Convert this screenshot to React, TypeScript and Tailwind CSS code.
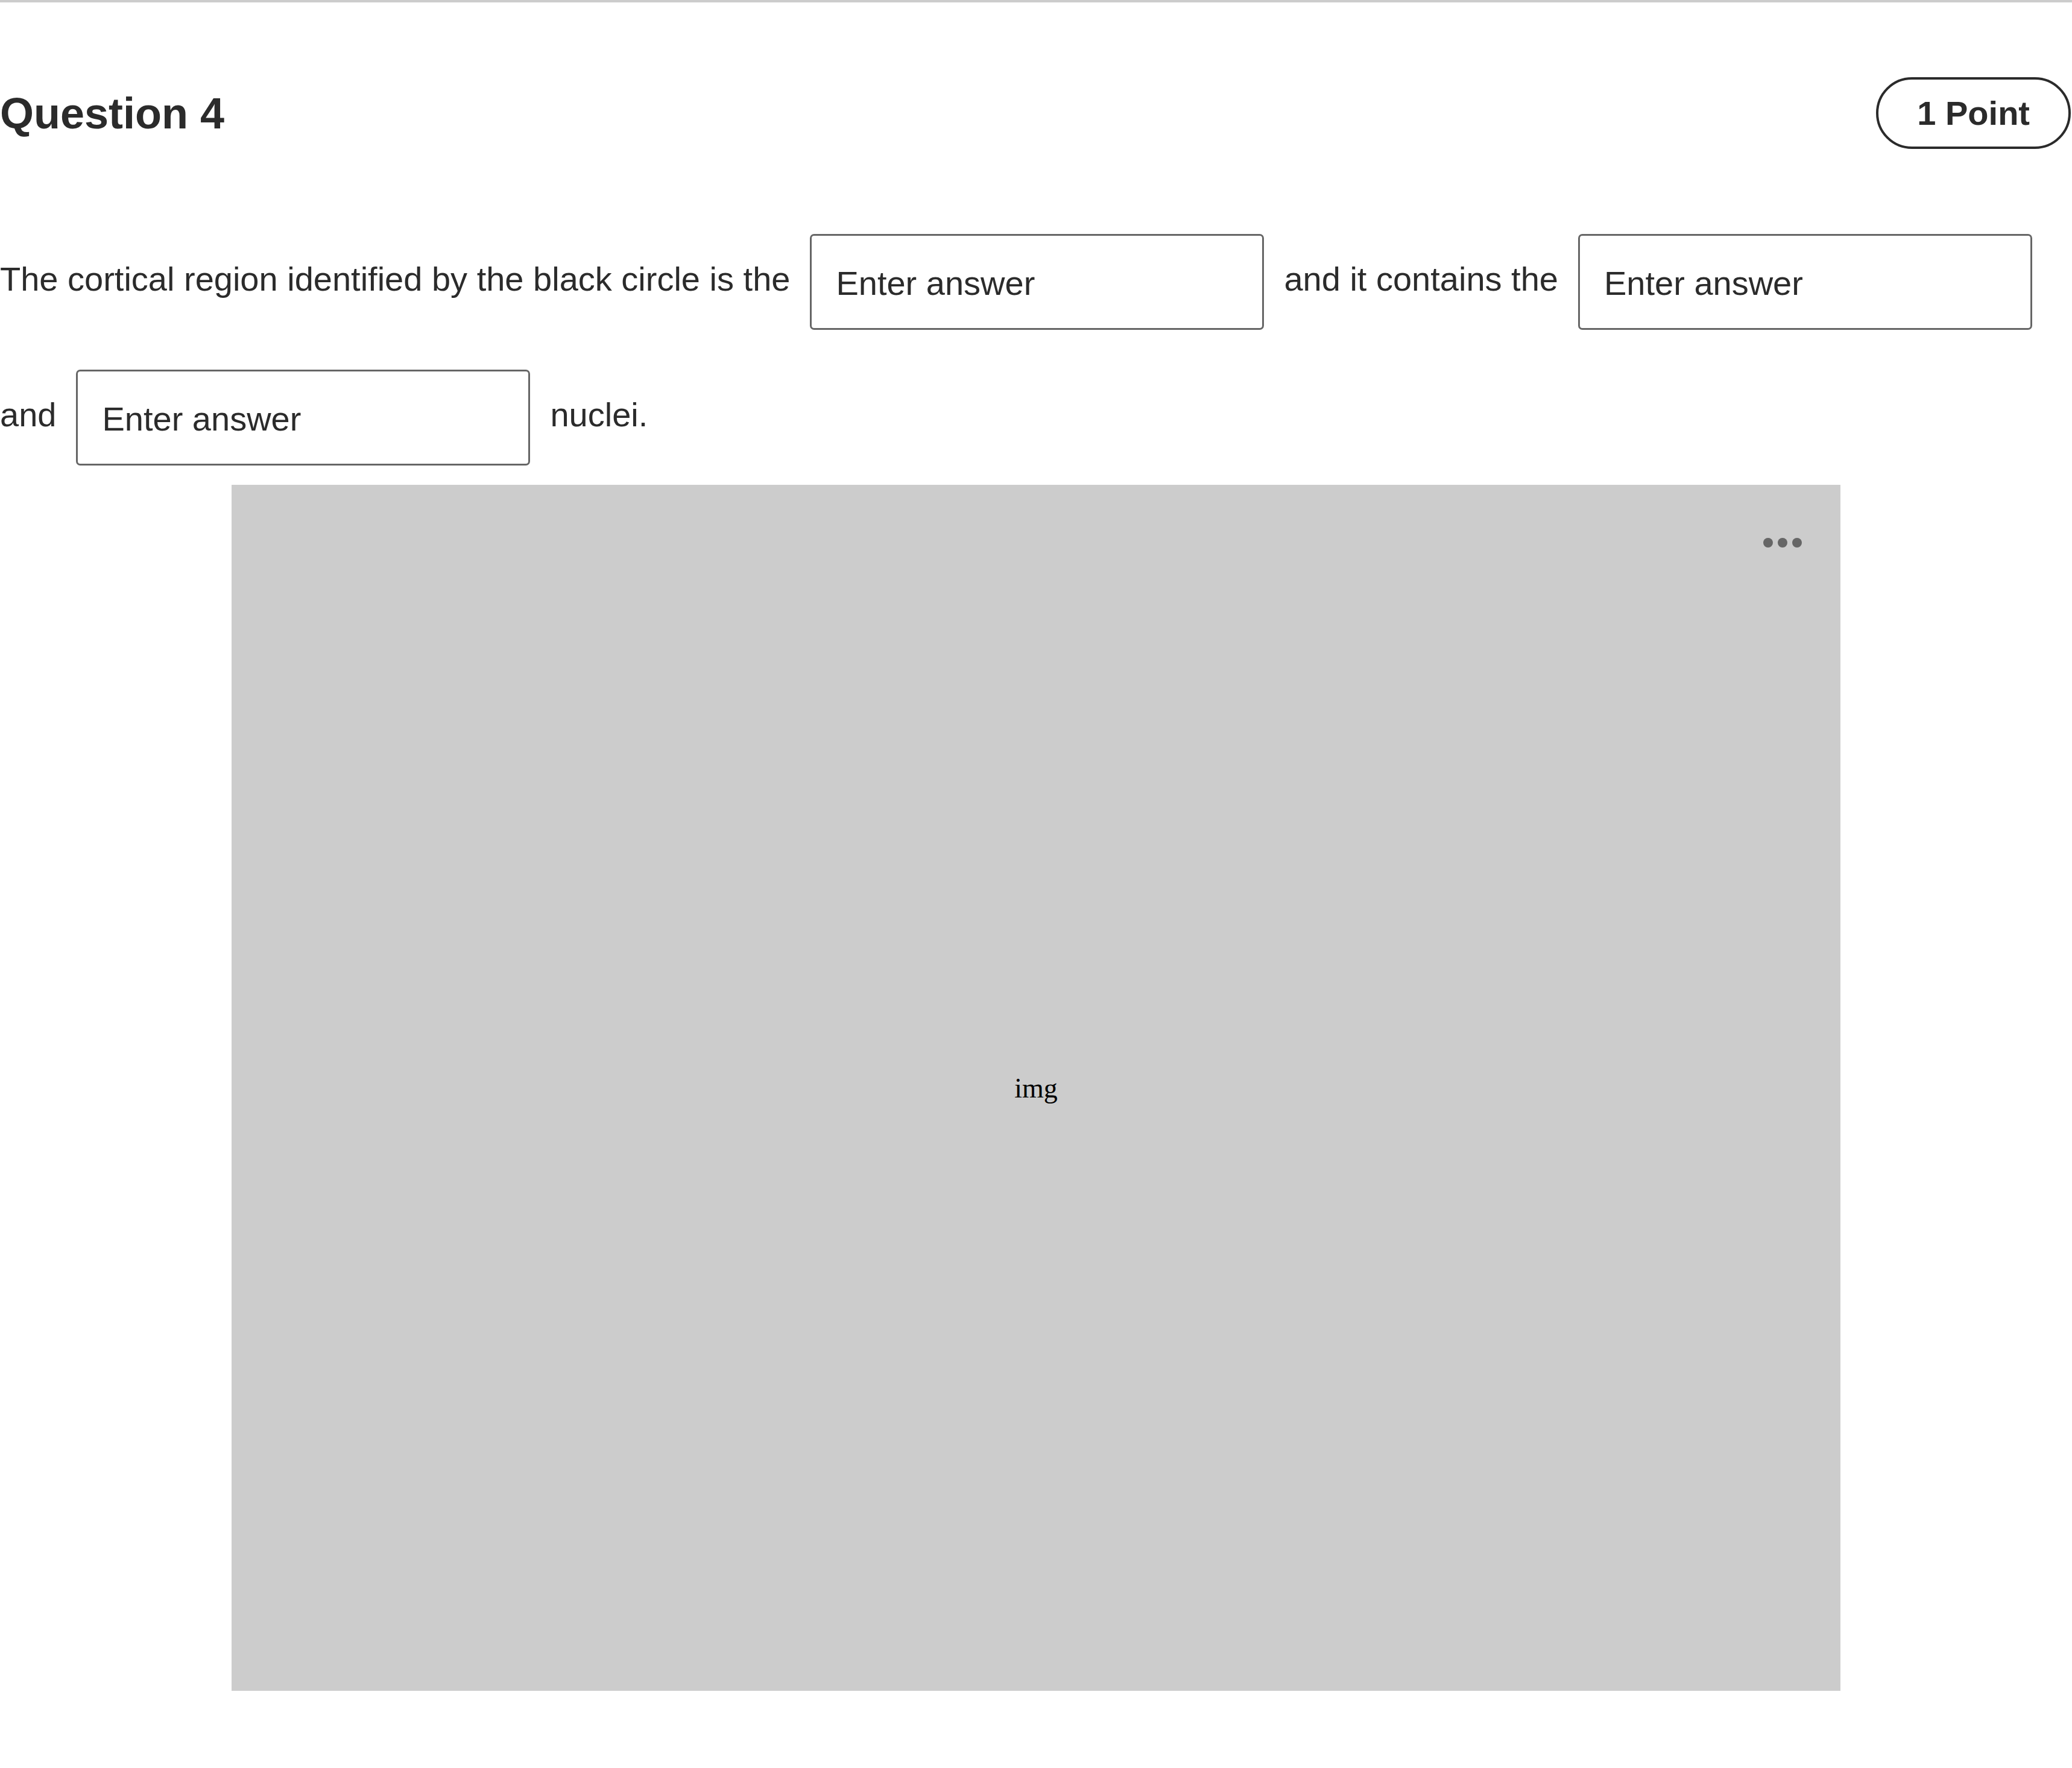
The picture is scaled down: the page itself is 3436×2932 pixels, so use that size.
import * as React from 'react';

function AnswerBox() {
  return (
    <input
      type="text"
      placeholder="Enter answer"
      className="w-[753px] h-[159px] shrink-0 border-[3px] border-[#666666] rounded-[7px] bg-white pl-[40px] pr-4 pt-[4px] text-[56px] text-[#2b2b2b] placeholder:text-[#2b2b2b] outline-none"
    />
  );
}

export default function App() {
  return (
    <div
      className="min-h-screen bg-white border-t-4 border-[#cccccc] text-[#2b2b2b]"
      style={{ fontFamily: '"Liberation Sans", Arial, sans-serif' }}
    >
      {/* Question header */}
      <div className="flex items-center justify-between pt-[124px] pr-[2px]">
        <h2 className="text-[72px] font-bold leading-normal">Question 4</h2>
        <span className="rounded-full border-4 border-[#2b2b2b] px-[64px] py-[23px] text-[56px] font-bold leading-[65px]">
          1 Point
        </span>
      </div>

      {/* Fill-in-the-blank sentence */}
      <div className="mt-[141px] flex flex-wrap items-center gap-x-[33px] gap-y-[66px] text-[56px] leading-normal">
        <span className="pb-[9px]">The cortical region identified by the black circle is the</span>
        <AnswerBox />
        <span className="pb-[9px]">and it contains the</span>
        <AnswerBox />
        <span className="pb-[9px]">and</span>
        <AnswerBox />
        <span className="pb-[9px]">nuclei.</span>
      </div>

      {/* Image placeholder */}
      <div className="mt-[32px] flex justify-center">
        <div className="relative w-[2668px] h-[2000px] bg-[#cccccc] flex items-center justify-center">
          <span
            className="text-[46px] text-black"
            style={{ fontFamily: '"Liberation Serif", "Times New Roman", serif' }}
          >
            img
          </span>
          <div className="absolute top-[88px] right-[64px] flex gap-2">
            <span className="w-4 h-4 rounded-full bg-[#666666]" />
            <span className="w-4 h-4 rounded-full bg-[#666666]" />
            <span className="w-4 h-4 rounded-full bg-[#666666]" />
          </div>
        </div>
      </div>
    </div>
  );
}
